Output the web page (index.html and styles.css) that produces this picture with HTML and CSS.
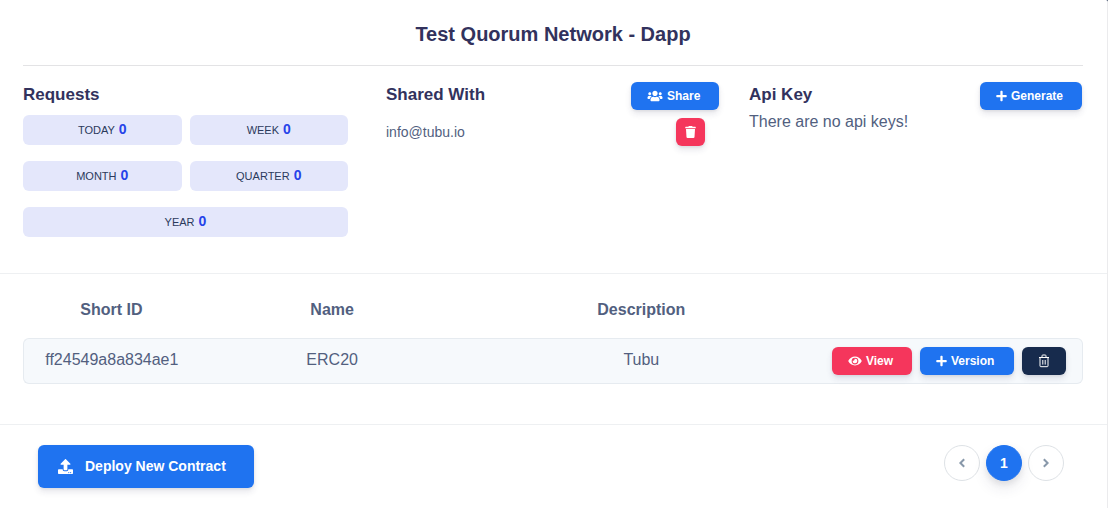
FILE: index.html
```html
<!DOCTYPE html>
<html lang="en">
<head>
<meta charset="utf-8">
<meta name="viewport" content="width=device-width, initial-scale=1">
<title>Test Quorum Network - Dapp</title>
<link rel="stylesheet" href="styles.css">
</head>
<body>
<svg class="sprite" aria-hidden="true">
  <symbol id="icon-plus" viewBox="0 0 448 512"><path d="M416 208H272V64c0-18-14-32-32-32h-32c-18 0-32 14-32 32v144H32c-18 0-32 14-32 32v32c0 18 14 32 32 32h144v144c0 18 14 32 32 32h32c18 0 32-14 32-32V304h144c18 0 32-14 32-32v-32c0-18-14-32-32-32z"/></symbol>
</svg>
<main class="card">
  <section class="summary">
    <h1 class="title">Test Quorum Network - Dapp</h1>
    <div class="columns">
      <section>
        <h2 class="heading">Requests</h2>
        <div class="stats">
          <div class="stat">TODAY <strong class="count">0</strong></div>
          <div class="stat">WEEK <strong class="count">0</strong></div>
          <div class="stat">MONTH <strong class="count">0</strong></div>
          <div class="stat">QUARTER <strong class="count">0</strong></div>
          <div class="stat stat-wide">YEAR <strong class="count">0</strong></div>
        </div>
      </section>
      <section>
        <div class="column-head">
          <h2 class="heading">Shared With</h2>
          <button class="btn btn-labelled btn-share" type="button">
            <svg class="icon icon-users" viewBox="0 0 640 512" aria-hidden="true"><path d="M96 224c35 0 64-29 64-64s-29-64-64-64-64 29-64 64 29 64 64 64zm448 0c35 0 64-29 64-64s-29-64-64-64-64 29-64 64 29 64 64 64zm32 32h-64c-18 0-34 7-45 18 40 22 69 62 75 110h66c18 0 32-14 32-32v-32c0-35-29-64-64-64zm-256 0c62 0 112-50 112-112S382 32 320 32 208 82 208 144s50 112 112 112zm77 32h-8c-21 10-44 16-69 16s-48-6-69-16h-8c-64 0-115 51-115 115v29c0 26 21 48 48 48h288c27 0 48-22 48-48v-29c0-64-51-115-115-115zm-224-14c-11-11-27-18-45-18H64c-35 0-64 29-64 64v32c0 18 14 32 32 32h66c6-48 35-88 75-110z"/></svg>
            <span>Share</span>
          </button>
        </div>
        <div class="shared-row">
          <span class="email">info@tubu.io</span>
          <button class="btn btn-danger btn-remove" type="button" aria-label="Remove info@tubu.io">
            <svg class="icon" viewBox="0 0 448 512" aria-hidden="true"><path d="M432 32H312l-9-19A24 24 0 0 0 281 0H167c-10 0-18 5-22 13l-9 19H16A16 16 0 0 0 0 48v32a16 16 0 0 0 16 16h416a16 16 0 0 0 16-16V48a16 16 0 0 0-16-16zM53 467a48 48 0 0 0 48 45h246a48 48 0 0 0 48-45l21-339H32z"/></svg>
          </button>
        </div>
      </section>
      <section>
        <div class="column-head">
          <h2 class="heading">Api Key</h2>
          <button class="btn btn-labelled btn-generate" type="button">
            <svg class="icon" aria-hidden="true"><use href="#icon-plus"/></svg>
            <span>Generate</span>
          </button>
        </div>
        <p class="empty">There are no api keys!</p>
      </section>
    </div>
  </section>

  <section class="contracts">
    <table class="table">
      <thead>
        <tr>
          <th class="col-id" scope="col">Short ID</th>
          <th class="col-name" scope="col">Name</th>
          <th class="col-description" scope="col">Description</th>
          <td class="col-actions"></td>
        </tr>
      </thead>
      <tbody>
        <tr>
          <td>ff24549a8a834ae1</td>
          <td>ERC20</td>
          <td>Tubu</td>
          <td class="cell-actions">
            <div class="actions">
              <button class="btn btn-labelled btn-danger btn-view" type="button">
                <svg class="icon icon-eye" viewBox="0 0 576 512" aria-hidden="true"><path fill-rule="evenodd" d="M572 241C518 136 411 64 288 64S58 136 4 241a32 32 0 0 0 0 30c54 105 161 177 284 177s230-72 284-177a32 32 0 0 0 0-30zM288 400a144 144 0 1 1 0-288 144 144 0 0 1 0 288zm0-240a95 95 0 0 0-25 4 48 48 0 0 1-67 67 96 96 0 1 0 92-71z"/></svg>
                <span>View</span>
              </button>
              <button class="btn btn-labelled btn-version" type="button">
                <svg class="icon" aria-hidden="true"><use href="#icon-plus"/></svg>
                <span>Version</span>
              </button>
              <button class="btn btn-dark btn-delete" type="button" aria-label="Delete contract">
                <svg class="icon icon-trash" viewBox="0 0 12 14" aria-hidden="true"><path d="M1 3.5h10M2 4v7.9q0 .8.8.8h6.4q.8 0 .8-.8V4M4 3V1.8Q4 1 4.8 1h2.4q.8 0 .8.8V3M4.8 6v4.6M7.2 6v4.6"/></svg>
              </button>
            </div>
          </td>
        </tr>
      </tbody>
    </table>
  </section>

  <footer class="footer">
    <button class="btn btn-deploy" type="button">
      <svg class="icon icon-upload" viewBox="0 0 512 512" aria-hidden="true"><path fill-rule="evenodd" d="M296 384h-80c-13 0-24-11-24-24V192h-88c-18 0-27-21-14-34L242 6c8-8 20-8 28 0l152 152c13 13 4 34-14 34h-88v168c0 13-11 24-24 24zm216-8v112c0 13-11 24-24 24H24c-13 0-24-11-24-24V376c0-13 11-24 24-24h136v8c0 31 25 56 56 56h80c31 0 56-25 56-56v-8h136c13 0 24 11 24 24zm-124 88a20 20 0 1 0-40 0 20 20 0 0 0 40 0zm64 0a20 20 0 1 0-40 0 20 20 0 0 0 40 0z"/></svg>
      <span>Deploy New Contract</span>
    </button>
    <nav class="pager" aria-label="Contract pages">
      <a class="page" href="#" aria-label="Previous"><svg class="chevron" viewBox="0 0 8 10" aria-hidden="true"><path d="M6.2 1.2 2.4 5l3.8 3.8"/></svg></a>
      <a class="page page-current" href="#" aria-current="page">1</a>
      <a class="page" href="#" aria-label="Next"><svg class="chevron" viewBox="0 0 8 10" aria-hidden="true"><path d="M1.8 1.2 5.6 5 1.8 8.8"/></svg></a>
    </nav>
  </footer>
</main>
</body>
</html>
```
FILE: styles.css
```css
* {
  box-sizing: border-box;
}

body {
  margin: 0;
  background: #172b4d;
  color: #525f7f;
  font-family: "Liberation Sans", Arial, sans-serif;
  font-size: 16px;
  line-height: 24px;
}

.sprite {
  position: absolute;
  width: 0;
  height: 0;
}

.card {
  min-height: 100vh;
  background: #fff;
  border-right: 1px solid #ebebed;
  border-top-right-radius: 2px;
}

.summary {
  padding: 20px 24px 36px 23px;
  border-bottom: 1px solid #eef0f2;
}

.title {
  margin: 0;
  padding-bottom: 17px;
  border-bottom: 1px solid #e3e3e5;
  color: #32325d;
  font-size: 20px;
  line-height: 28px;
  text-align: center;
}

.columns {
  display: grid;
  grid-template-columns: repeat(3, 1fr);
  gap: 30px;
  padding: 16px 1px 0 0;
}

.column-head {
  display: flex;
  justify-content: space-between;
  align-items: flex-start;
}

.heading {
  margin: 0;
  color: #32325d;
  font-size: 17px;
  line-height: 25px;
}

.stats {
  display: grid;
  grid-template-columns: 1fr 1fr;
  gap: 16px 8px;
  margin: 8px 8px 0 0;
}

.stat {
  display: flex;
  align-items: baseline;
  justify-content: center;
  gap: 4px;
  padding: 5px 0;
  border-radius: 6px;
  background: #e4e7fb;
  color: #2b3a5c;
  font-size: 11px;
  line-height: 20px;
}

.stat-wide {
  grid-column: 1 / -1;
}

.count {
  color: #2643e9;
  font-size: 14px;
  line-height: 18px;
}

.btn {
  display: inline-flex;
  align-items: center;
  justify-content: center;
  gap: 4px;
  height: 28px;
  padding: 0;
  border: 0;
  border-radius: 6px;
  background: #1f73f0;
  box-shadow: 0 4px 6px rgba(50, 50, 93, .11), 0 1px 3px rgba(0, 0, 0, .08);
  color: #fff;
  font: bold 12px/18px "Liberation Sans", Arial, sans-serif;
  cursor: pointer;
}

.btn-labelled {
  justify-content: flex-start;
  padding: 0 16px;
}

.btn-danger {
  background: #f5365c;
}

.btn-dark {
  background: #172b4d;
}

.btn-share {
  width: 88px;
}

.btn-generate {
  width: 102px;
}

.btn-remove {
  width: 29px;
}

.btn-view {
  width: 80px;
}

.btn-version {
  width: 94px;
}

.btn-delete {
  width: 44px;
}

.icon {
  flex: none;
  width: 11px;
  height: 12px;
  fill: currentColor;
}

.icon-users {
  width: 16px;
}

.icon-eye {
  width: 14px;
}

.icon-trash {
  width: 12px;
  height: 14px;
  fill: none;
  stroke: currentColor;
}

.shared-row {
  display: flex;
  align-items: center;
  justify-content: space-between;
  padding: 8px 14px 0 0;
}

.email {
  font-size: 14px;
}

.empty {
  margin: 0;
}

.contracts {
  padding: 24px 24px 40px 23px;
  border-bottom: 1px solid #eef0f2;
}

.table {
  width: 100%;
  table-layout: fixed;
  border-collapse: separate;
  border-spacing: 0;
  text-align: center;
}

.table th,
.table td {
  padding: 0;
  vertical-align: top;
}

.table thead th {
  padding-bottom: 16px;
}

.col-id {
  width: calc(100% / 6);
}

.col-name,
.col-actions {
  width: 25%;
}

.col-description {
  width: calc(100% / 3);
}

.table tbody td {
  padding: 9px 0;
  border: solid #e6ebf0;
  border-width: 1px 0;
  background: #f6f9fc;
}

.table tbody td:first-child {
  border-left-width: 1px;
  border-radius: 6px 0 0 6px;
}

.table tbody .cell-actions {
  padding: 8px 16px 8px 0;
  border-right-width: 1px;
  border-radius: 0 6px 6px 0;
}

.actions {
  display: flex;
  justify-content: flex-end;
  gap: 8px;
}

.footer {
  display: flex;
  align-items: flex-start;
  justify-content: space-between;
  padding: 20px 43px 20px 38px;
}

.btn-deploy {
  justify-content: flex-start;
  gap: 12px;
  width: 216px;
  height: 43px;
  padding: 0 20px;
  font-size: 14px;
  line-height: 21px;
}

.icon-upload {
  width: 15px;
  height: 15px;
}

.pager {
  display: flex;
  gap: 6px;
}

.page {
  display: flex;
  align-items: center;
  justify-content: center;
  width: 36px;
  height: 36px;
  border: 1px solid #dee2e6;
  border-radius: 50%;
  color: #8898aa;
  font-size: 14px;
  text-decoration: none;
}

.page-current {
  border-color: #1f73f0;
  background: #1f73f0;
  box-shadow: 0 7px 14px rgba(50, 50, 93, .1), 0 3px 6px rgba(0, 0, 0, .08);
  color: #fff;
  font-weight: bold;
}

.chevron {
  width: 8px;
  height: 10px;
  fill: none;
  stroke: currentColor;
  stroke-width: 2;
}
```
